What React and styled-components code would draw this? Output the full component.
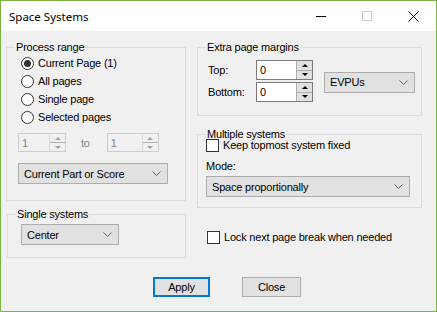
import React from "react";
import styled, { createGlobalStyle } from "styled-components";

const GlobalStyle = createGlobalStyle`
  html, body {
    margin: 0;
    padding: 0;
    background: #f0f0f0;
  }
  body {
    font-family: "Liberation Sans", Arial, sans-serif;
    font-size: 11px;
    letter-spacing: -0.2px;
    color: #000;
  }
`;

const Window = styled.div`
  width: 437px;
  height: 312px;
  box-sizing: border-box;
  border: 1px solid #7cb342;
  background: #f0f0f0;
  display: flex;
  flex-direction: column;
  overflow: hidden;
`;

const TitleBar = styled.div`
  height: 30px;
  flex-shrink: 0;
  background: #fff;
  display: flex;
  align-items: center;
`;

const Title = styled.div`
  flex: 1;
  padding-left: 8px;
  font-family: "Noto Sans", sans-serif;
  font-size: 11.5px;
  letter-spacing: 0;
`;

const Caption = styled.div`
  width: 46px;
  height: 30px;
  display: flex;
  align-items: center;
  justify-content: center;
`;

const Body = styled.div`
  flex: 1;
  display: flex;
  flex-direction: column;
  padding: 10px 0 14px 5px;
`;

const Columns = styled.div`
  display: flex;
  gap: 11px;
  align-items: flex-start;
`;

const Column = styled.div`
  width: ${(p) => p.$width}px;
  display: flex;
  flex-direction: column;
`;

const Group = styled.fieldset`
  margin: ${(p) => p.$top || 0}px 0 0 ${(p) => p.$left || 0}px;
  padding: 0;
  border: 1px solid #dcdcdc;
  min-width: 0;
`;

const Legend = styled.legend`
  margin-left: 8px;
  padding: 0 1px;
  line-height: 13px;
  font-size: 11px;
`;

const GroupContent = styled.div`
  padding: ${(p) => p.$pad};
  display: flex;
  flex-direction: column;
`;

const RadioRow = styled.label`
  height: 18px;
  display: flex;
  align-items: center;
  gap: 4px;
  padding-left: 3px;
`;

const RadioCircle = styled.span`
  width: 13px;
  height: 13px;
  box-sizing: border-box;
  border: 1px solid #333;
  border-radius: 50%;
  background: #fff;
  display: flex;
  align-items: center;
  justify-content: center;
  &::after {
    content: "";
    width: 7px;
    height: 7px;
    border-radius: 50%;
    background: ${(p) => (p.$checked ? "#333" : "transparent")};
  }
`;

const SpinRow = styled.div`
  display: flex;
  align-items: center;
  margin-top: 7px;
`;

const ToLabel = styled.span`
  color: #838383;
  margin: 0 17px 0 15px;
`;

const SpinBox = styled.div`
  width: ${(p) => p.$width}px;
  height: ${(p) => p.$height || 19}px;
  box-sizing: border-box;
  border: 1px solid ${(p) => (p.$disabled ? "#cccccc" : "#7a7a7a")};
  background: ${(p) => (p.$disabled ? "#f0f0f0" : "#fff")};
  display: flex;
`;

const SpinValue = styled.div`
  flex: 1;
  padding-left: 3px;
  display: flex;
  align-items: center;
  color: ${(p) => (p.$disabled ? "#838383" : "#000")};
`;

const Spinner = styled.div`
  width: 15px;
  display: flex;
  flex-direction: column;
  border-left: 1px solid ${(p) => (p.$disabled ? "#dcdcdc" : "#adadad")};
`;

const SpinButton = styled.div`
  flex: 1;
  background: ${(p) => (p.$disabled ? "#f0f0f0" : "#e1e1e1")};
  display: flex;
  align-items: center;
  justify-content: center;
  & + & {
    border-top: 1px solid ${(p) => (p.$disabled ? "#dcdcdc" : "#adadad")};
  }
  &::after {
    content: "";
    border-left: 3px solid transparent;
    border-right: 3px solid transparent;
    ${(p) =>
      p.$down
        ? `border-top: 3px solid ${p.$disabled ? "#a0a0a0" : "#000"};`
        : `border-bottom: 3px solid ${p.$disabled ? "#a0a0a0" : "#000"};`}
  }
`;

const Select = styled.div`
  width: ${(p) => p.$width}px;
  height: 21px;
  box-sizing: border-box;
  margin-top: ${(p) => p.$top || 0}px;
  border: 1px solid #adadad;
  background: #e1e1e1;
  display: flex;
  align-items: center;
  justify-content: space-between;
  padding: 0 6px 0 5px;
  flex-shrink: 0;
`;

const MarginsGrid = styled.div`
  display: grid;
  grid-template-columns: 48px 57px;
  row-gap: 2px;
  align-items: center;
`;

const MarginsRow = styled.div`
  display: flex;
  align-items: center;
  gap: 11px;
  margin-top: 6px;
`;

const CheckRow = styled.label`
  display: flex;
  align-items: center;
  gap: 4px;
  height: 14px;
  margin-top: ${(p) => p.$top || 0}px;
  padding-left: ${(p) => p.$left || 0}px;
`;

const CheckBox = styled.span`
  width: 13px;
  height: 13px;
  box-sizing: border-box;
  border: 1px solid #333;
  background: #fff;
`;

const FieldLabel = styled.div`
  line-height: 13px;
  margin-top: 8px;
`;

const ButtonRow = styled.div`
  margin-top: auto;
  display: flex;
  gap: 32px;
  padding-left: 147px;
`;

const Button = styled.div`
  width: ${(p) => p.$width}px;
  height: 20px;
  box-sizing: border-box;
  border: ${(p) => (p.$default ? "2px solid #0078d7" : "1px solid #adadad")};
  background: #e1e1e1;
  display: flex;
  align-items: center;
  justify-content: center;
`;

const Chevron = () => (
  <svg width="9" height="5" viewBox="0 0 9 5">
    <polyline points="0.5,0.5 4.5,4.5 8.5,0.5" fill="none" stroke="#606060" strokeWidth="1" />
  </svg>
);

function Dropdown({ width, top, children }) {
  return (
    <Select $width={width} $top={top}>
      <span>{children}</span>
      <Chevron />
    </Select>
  );
}

function Spin({ width, height, value, disabled }) {
  return (
    <SpinBox $width={width} $height={height} $disabled={disabled}>
      <SpinValue $disabled={disabled}>{value}</SpinValue>
      <Spinner $disabled={disabled}>
        <SpinButton $disabled={disabled} />
        <SpinButton $disabled={disabled} $down />
      </Spinner>
    </SpinBox>
  );
}

function Radio({ checked, children }) {
  return (
    <RadioRow>
      <RadioCircle $checked={checked} />
      <span>{children}</span>
    </RadioRow>
  );
}

export default function App() {
  return (
    <>
      <GlobalStyle />
      <Window>
        <TitleBar>
          <Title>Space Systems</Title>
          <Caption>
            <svg width="10" height="1" viewBox="0 0 10 1">
              <rect width="10" height="1" fill="#000" />
            </svg>
          </Caption>
          <Caption>
            <svg width="10" height="10" viewBox="0 0 10 10">
              <rect x="0.5" y="0.5" width="9" height="9" fill="none" stroke="#cccccc" />
            </svg>
          </Caption>
          <Caption>
            <svg width="11" height="11" viewBox="0 0 11 11">
              <path d="M0.5 0.5 L10.5 10.5 M10.5 0.5 L0.5 10.5" stroke="#000" strokeWidth="1" />
            </svg>
          </Caption>
        </TitleBar>

        <Body>
          <Columns>
            <Column $width={180}>
              <Group>
                <Legend>Process range</Legend>
                <GroupContent $pad="0 0 16px 11px">
                  <Radio checked>Current Page (1)</Radio>
                  <Radio>All pages</Radio>
                  <Radio>Single page</Radio>
                  <Radio>Selected pages</Radio>
                  <SpinRow>
                    <Spin width={48} value="1" disabled />
                    <ToLabel>to</ToLabel>
                    <Spin width={52} value="1" disabled />
                  </SpinRow>
                  <Dropdown width={150} top={11}>
                    Current Part or Score
                  </Dropdown>
                </GroupContent>
              </Group>
              <Group $top={7} $left={1}>
                <Legend>Single systems</Legend>
                <GroupContent $pad="0 0 12px 13px">
                  <Dropdown width={98} top={3}>
                    Center
                  </Dropdown>
                </GroupContent>
              </Group>
            </Column>

            <Column $width={225}>
              <Group>
                <Legend>Extra page margins</Legend>
                <GroupContent $pad="0 0 13px 10px">
                  <MarginsRow>
                    <MarginsGrid>
                      <span>Top:</span>
                      <Spin width={57} height={20} value="0" />
                      <span>Bottom:</span>
                      <Spin width={57} height={20} value="0" />
                    </MarginsGrid>
                    <Dropdown width={91} top={2}>
                      EVPUs
                    </Dropdown>
                  </MarginsRow>
                </GroupContent>
              </Group>
              <Group $top={12}>
                <Legend>Multiple systems</Legend>
                <GroupContent $pad="0 0 10px 8px">
                  <CheckRow $top={-3}>
                    <CheckBox />
                    <span>Keep topmost system fixed</span>
                  </CheckRow>
                  <FieldLabel>Mode:</FieldLabel>
                  <Dropdown width={204} top={3}>
                    Space proportionally
                  </Dropdown>
                </GroupContent>
              </Group>
              <CheckRow $top={22} $left={10}>
                <CheckBox />
                <span>Lock next page break when needed</span>
              </CheckRow>
            </Column>
          </Columns>

          <ButtonRow>
            <Button $width={57} $default>
              Apply
            </Button>
            <Button $width={59}>Close</Button>
          </ButtonRow>
        </Body>
      </Window>
    </>
  );
}
